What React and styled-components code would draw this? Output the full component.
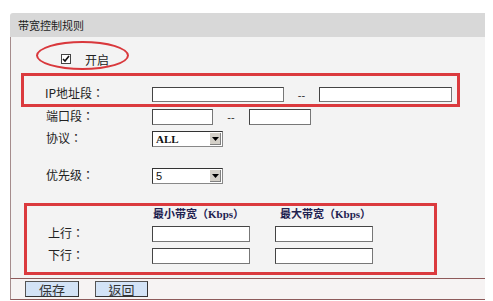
import React from "react";
import styled, { createGlobalStyle } from "styled-components";

const GlobalStyle = createGlobalStyle`
  body {
    margin: 0;
    background: #ffffff;
    font-family: "Liberation Sans", "Noto Sans CJK TC", sans-serif;
    color: #222;
  }
`;

const cjk = `"Noto Sans CJK TC", "Noto Sans CJK SC", sans-serif`;

const Panel = styled.div`
  margin: 13px 0 0 10px;
  width: 475px;
`;

const Header = styled.div`
  height: 24px;
  line-height: 24px;
  padding-left: 8px;
  background: #d8d8d8;
  border-top-left-radius: 3px;
  font-family: ${cjk};
  font-size: 11px;
  color: #1e1e1e;
`;

const Body = styled.div`
  height: 241px;
  background: #f3f3f3;
  border-left: 1px solid #a58c8c;
  box-sizing: border-box;
  display: flex;
  flex-direction: column;
`;

const CheckRow = styled.div`
  position: relative;
  height: 36px;
  padding: 17px 0 0 50px;
  box-sizing: border-box;
  display: flex;
  align-items: flex-start;
  gap: 14px;
`;

// annotation drawn over the checkbox
const Ellipse = styled.div`
  position: absolute;
  left: 25px;
  top: 4px;
  width: 93px;
  height: 29px;
  border: 2px solid #d9383c;
  border-radius: 50%;
  box-sizing: border-box;
`;

const CheckBox = styled.span`
  width: 10px;
  height: 10px;
  box-sizing: border-box;
  border: 1px solid #444;
  background: #fff;
  display: flex;
  align-items: center;
  justify-content: center;
`;

const CheckText = styled.span`
  font-family: ${cjk};
  font-size: 12px;
  line-height: 12px;
  color: #222;
`;

const RedBox = styled.div`
  margin-left: ${(p) => p.$left}px;
  width: ${(p) => p.$width}px;
  height: ${(p) => p.$height}px;
  border: 3px solid #db3a3e;
  box-sizing: border-box;
  margin-top: ${(p) => p.$top || 0}px;
  padding: ${(p) => p.$pad};
  display: flex;
  flex-direction: column;
`;

const Row = styled.div`
  display: flex;
  align-items: center;
  height: ${(p) => p.$height || 16}px;
  margin-top: ${(p) => p.$top || 0}px;
  padding-left: ${(p) => p.$left || 0}px;
`;

const Label = styled.span`
  width: ${(p) => p.$width}px;
  flex-shrink: 0;
  font-family: ${cjk};
  font-size: 12px;
  line-height: 12px;
  margin-top: -3px;
  color: #222;
  white-space: nowrap;
`;

const Field = styled.span`
  display: block;
  width: ${(p) => p.$width}px;
  height: ${(p) => p.$height || 16}px;
  box-sizing: border-box;
  background: #fff;
  border: 1px solid #777;
  border-top-color: #444;
  border-left-color: #444;
  flex-shrink: 0;
`;

const Dash = styled.span`
  width: ${(p) => p.$width}px;
  text-align: center;
  font-family: "Liberation Sans", sans-serif;
  font-size: 11px;
  color: #333;
  flex-shrink: 0;
`;

const Select = styled.span`
  display: flex;
  align-items: center;
  width: 71px;
  height: 16px;
  box-sizing: border-box;
  background: #fff;
  border: 1px solid #888;
  border-top-color: #333;
  border-left-color: #333;
  padding-left: 3px;
  font-family: ${(p) => (p.$serif ? '"Liberation Serif", serif' : '"Liberation Sans", sans-serif')};
  font-weight: ${(p) => (p.$serif ? 700 : 400)};
  font-size: 11px;
  color: #111;
`;

const SelectValue = styled.span`
  flex: 1;
`;

const SelectButton = styled.span`
  width: 11px;
  height: 12px;
  margin-right: 1px;
  background: #d4d0c8;
  border-right: 1px solid #808080;
  border-bottom: 1px solid #808080;
  box-sizing: border-box;
  display: flex;
  align-items: center;
  justify-content: center;
`;

const ColHead = styled.span`
  width: ${(p) => p.$width}px;
  padding-left: ${(p) => p.$pad}px;
  box-sizing: border-box;
  flex-shrink: 0;
  font-family: "Liberation Serif", ${cjk};
  font-weight: 700;
  font-size: 11px;
  color: #1f2250;
  white-space: nowrap;
`;

const Footer = styled.div`
  height: 22px;
  box-sizing: border-box;
  border-top: 1px solid #8e5a5a;
  border-bottom: 1px solid #8e5a5a;
  border-left: 1px solid #a58c8c;
  background: #f6f3f3;
  display: flex;
  align-items: center;
  gap: 16px;
  padding-left: 14px;
`;

const Button = styled.span`
  width: ${(p) => p.$width}px;
  height: 16px;
  box-sizing: border-box;
  border: 1px solid #555;
  border-right-color: #333;
  border-bottom-color: #333;
  background: #d3e3f6;
  display: flex;
  align-items: center;
  justify-content: center;
  font-family: ${cjk};
  font-size: 13px;
  color: #333;
`;

const Arrow = () => (
  <svg width="7" height="4" viewBox="0 0 7 4">
    <path d="M0 0h7L3.5 4z" fill="#000" />
  </svg>
);

const Check = () => (
  <svg width="8" height="8" viewBox="0 0 8 8">
    <path d="M1 4l2 2 4-5" stroke="#111" strokeWidth="1.6" fill="none" />
  </svg>
);

export default function App() {
  return (
    <>
      <GlobalStyle />
      <Panel>
        <Header>带宽控制规则</Header>
        <Body>
          <CheckRow>
            <CheckBox><Check /></CheckBox>
            <CheckText>开启</CheckText>
            <Ellipse />
          </CheckRow>

          <RedBox $left={10} $width={439} $height={34} $pad="11px 0 0 21px">
            <Row $height={15}>
              <Label $width={107}>IP地址段：</Label>
              <Field $width={132} $height={15} />
              <Dash $width={35}>--</Dash>
              <Field $width={133} $height={15} />
            </Row>
          </RedBox>

          <Row $top={2} $left={35}>
            <Label $width={106}>端口段：</Label>
            <Field $width={61} />
            <Dash $width={36}>--</Dash>
            <Field $width={62} />
          </Row>

          <Row $top={6} $left={35}>
            <Label $width={106}>协议：</Label>
            <Select $serif>
              <SelectValue>ALL</SelectValue>
              <SelectButton><Arrow /></SelectButton>
            </Select>
          </Row>

          <Row $top={21} $left={35}>
            <Label $width={106}>优先级：</Label>
            <Select>
              <SelectValue>5</SelectValue>
              <SelectButton><Arrow /></SelectButton>
            </Select>
          </Row>

          <RedBox $left={13} $width={413} $height={72} $top={19} $pad="0 0 0 21px">
            <Row $height={14}>
              <Label $width={104} />
              <ColHead $width={123} $pad={1}>最小带宽（Kbps）</ColHead>
              <ColHead $width={100} $pad={5}>最大带宽（Kbps）</ColHead>
            </Row>
            <Row $top={6}>
              <Label $width={104}>上行：</Label>
              <Field $width={98} />
              <Dash $width={25} />
              <Field $width={98} />
            </Row>
            <Row $top={6}>
              <Label $width={104}>下行：</Label>
              <Field $width={98} />
              <Dash $width={25} />
              <Field $width={98} />
            </Row>
          </RedBox>
        </Body>
        <Footer>
          <Button $width={54}>保存</Button>
          <Button $width={53}>返回</Button>
        </Footer>
      </Panel>
    </>
  );
}
